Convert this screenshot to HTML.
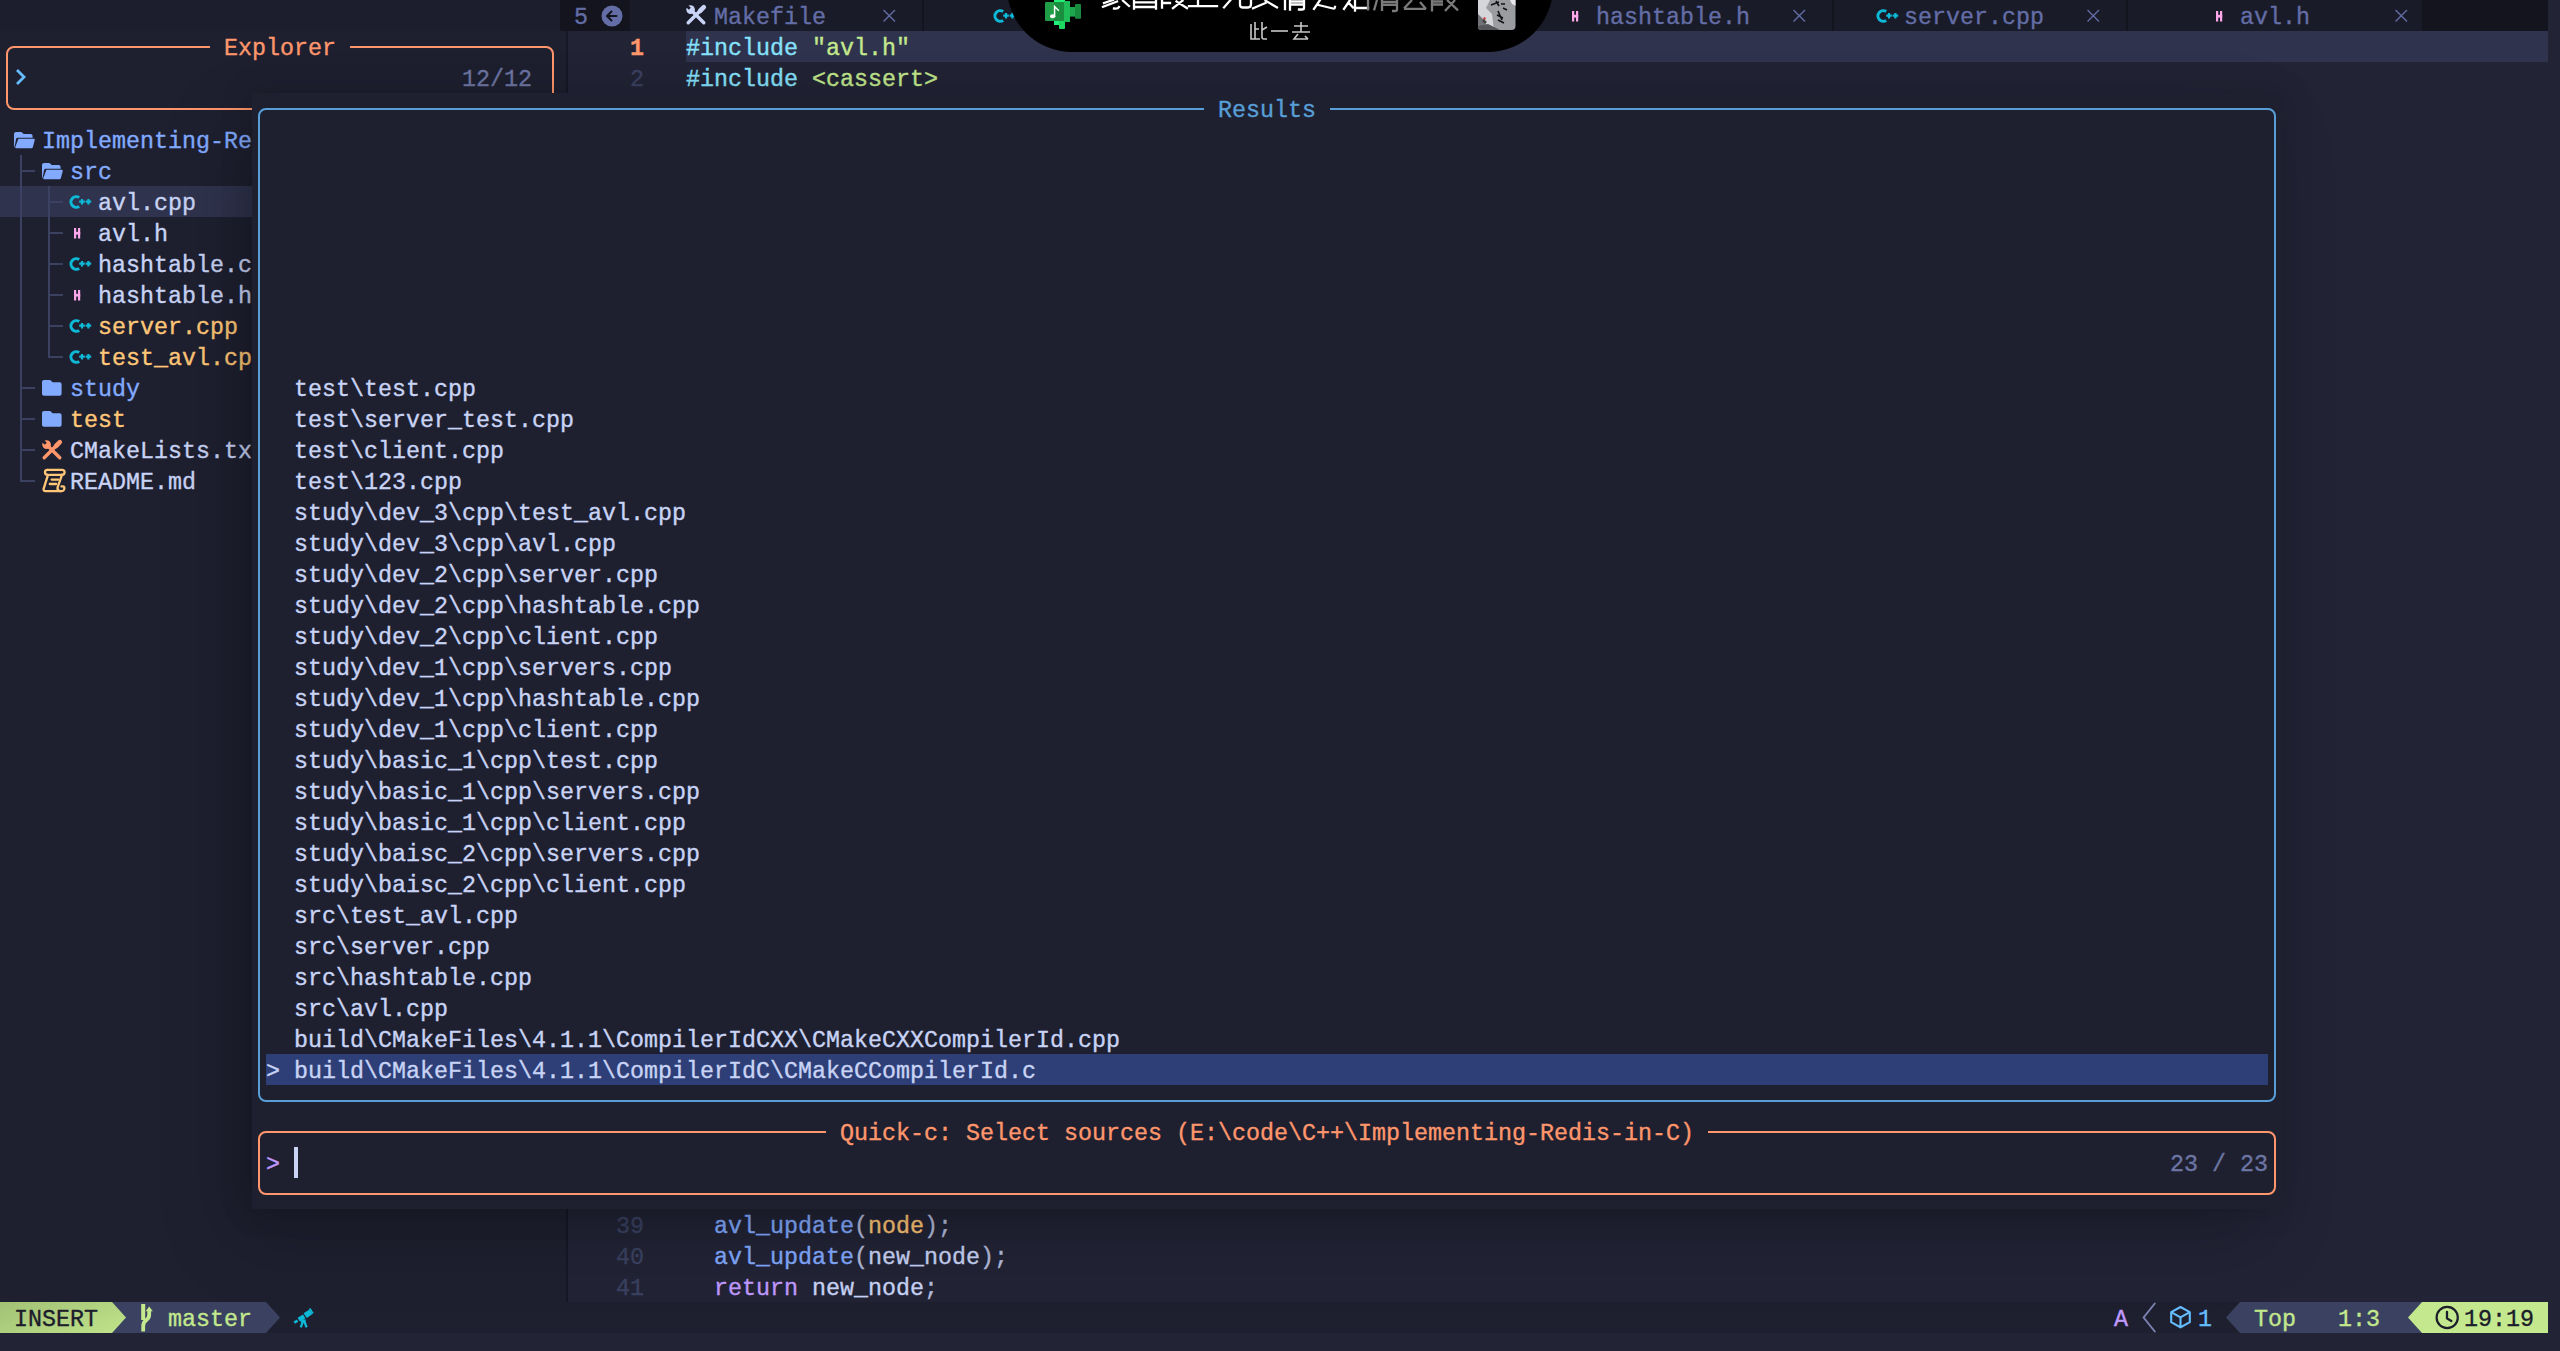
<!DOCTYPE html>
<html><head><meta charset="utf-8"><style>
html,body{margin:0;padding:0;width:2560px;height:1351px;overflow:hidden;background:#222436}
.t{position:absolute;white-space:pre;font-family:"Liberation Mono",monospace;font-size:23.33px;line-height:31px;height:31px;-webkit-text-stroke:0.35px currentColor}
svg{overflow:visible}
</style></head><body>
<div style="position:absolute;left:0px;top:0px;width:2560px;height:1351px;background:#222436;"></div><div style="position:absolute;left:0px;top:0px;width:560px;height:31px;background:#1c1e2d;"></div><div style="position:absolute;left:560px;top:0px;width:70px;height:31px;background:#13141e;"></div><div style="position:absolute;left:630px;top:0px;width:1792px;height:31px;background:#191b28;"></div><div style="position:absolute;left:2422px;top:0px;width:126px;height:31px;background:#13141e;"></div><div style="position:absolute;left:0px;top:31px;width:560px;height:1271px;background:#1e2030;"></div><div style="position:absolute;left:560px;top:31px;width:7px;height:1271px;background:#1e2030;"></div><div style="position:absolute;left:566px;top:31px;width:2px;height:1271px;background:#171826;"></div><div style="position:absolute;left:686px;top:31px;width:1862px;height:31px;background:#2f334d;"></div><div style="position:absolute;left:0px;top:186px;width:560px;height:31px;background:#2f334d;"></div><div style="position:absolute;left:0px;top:1302px;width:2548px;height:31px;background:#1e2030;"></div><div class="t" style="left:574px;top:3px;color:#636da6;">5</div><svg style="position:absolute;left:601px;top:5px;" width="22" height="22" viewBox="0 0 22 22"><circle cx="11" cy="11" r="10.5" fill="#636da6"/><path d="M15.5 11H6.5M10.5 6.5L6 11l4.5 4.5" stroke="#13141e" stroke-width="2" fill="none" stroke-linecap="round" stroke-linejoin="round"/></svg><svg style="position:absolute;left:686px;top:5px;" width="20" height="20" viewBox="0 0 20 20"><defs><mask id="tm1"><rect x="-2" y="-2" width="24" height="24" fill="#fff"/><path d="M-1 -1L3.8 3.8" stroke="#000" stroke-width="2.8"/></mask></defs><g mask="url(#tm1)"><circle cx="4.6" cy="4.6" r="4.3" fill="#c8d3f5"/></g><path d="M5.5 5.5L17.8 17.8" stroke="#c8d3f5" stroke-width="3.4" stroke-linecap="round"/><path d="M13.2 6.8L2.2 17.8" stroke="#c8d3f5" stroke-width="3.4" stroke-linecap="round"/><path d="M14 6L17.8 2.2" stroke="#c8d3f5" stroke-width="4.6" stroke-linecap="round"/></svg><div class="t" style="left:714px;top:3px;color:#636da6;">Makefile</div><svg style="position:absolute;left:882px;top:0px;" width="14" height="31" viewBox="0 0 14 31"><path d="M1.5 10L13 21.5M13 10L1.5 21.5" stroke="#636da6" stroke-width="1.4"/></svg><div style="position:absolute;left:922px;top:0px;width:2px;height:31px;background:#13141e;"></div><div style="position:absolute;left:1216px;top:0px;width:2px;height:31px;background:#13141e;"></div><div style="position:absolute;left:1510px;top:0px;width:2px;height:31px;background:#13141e;"></div><svg style="position:absolute;left:993px;top:8px;" width="24" height="16" viewBox="0 0 24 16"><path d="M10.2 3.6A5.3 5.3 0 1 0 10.2 12.4" stroke="#0db9d7" stroke-width="3" fill="none"/><path d="M10.2 7.7h5.6M13 4.9v5.6M16.6 7.7h5.6M19.4 4.9v5.6" stroke="#0db9d7" stroke-width="2.2"/></svg><svg style="position:absolute;left:1572px;top:10.6px;" width="7" height="11" viewBox="0 0 7 11"><path d="M1.1 0V10.4M5.1 0V10.4" stroke="#fca7ea" stroke-width="2.2"/><path d="M0 5.2H6.2" stroke="#fca7ea" stroke-width="2.8"/></svg><div class="t" style="left:1596px;top:3px;color:#636da6;">hashtable.h</div><svg style="position:absolute;left:1792px;top:0px;" width="14" height="31" viewBox="0 0 14 31"><path d="M1.5 10L13 21.5M13 10L1.5 21.5" stroke="#636da6" stroke-width="1.4"/></svg><div style="position:absolute;left:1832px;top:0px;width:2px;height:31px;background:#13141e;"></div><svg style="position:absolute;left:1876px;top:8px;" width="24" height="16" viewBox="0 0 24 16"><path d="M10.2 3.6A5.3 5.3 0 1 0 10.2 12.4" stroke="#0db9d7" stroke-width="3" fill="none"/><path d="M10.2 7.7h5.6M13 4.9v5.6M16.6 7.7h5.6M19.4 4.9v5.6" stroke="#0db9d7" stroke-width="2.2"/></svg><div class="t" style="left:1904px;top:3px;color:#636da6;">server.cpp</div><svg style="position:absolute;left:2086px;top:0px;" width="14" height="31" viewBox="0 0 14 31"><path d="M1.5 10L13 21.5M13 10L1.5 21.5" stroke="#636da6" stroke-width="1.4"/></svg><div style="position:absolute;left:2126px;top:0px;width:2px;height:31px;background:#13141e;"></div><svg style="position:absolute;left:2216px;top:10.6px;" width="7" height="11" viewBox="0 0 7 11"><path d="M1.1 0V10.4M5.1 0V10.4" stroke="#fca7ea" stroke-width="2.2"/><path d="M0 5.2H6.2" stroke="#fca7ea" stroke-width="2.8"/></svg><div class="t" style="left:2240px;top:3px;color:#636da6;">avl.h</div><svg style="position:absolute;left:2394px;top:0px;" width="14" height="31" viewBox="0 0 14 31"><path d="M1.5 10L13 21.5M13 10L1.5 21.5" stroke="#636da6" stroke-width="1.4"/></svg><div class="t" style="left:630px;top:34px;color:#ff966c;font-weight:bold">1</div><div class="t" style="left:630px;top:65px;color:#3b4261;">2</div><div class="t" style="left:686px;top:34px;color:#86e1fc">#include <span style="color:#c3e88d">"avl.h"</span></div><div class="t" style="left:686px;top:65px;color:#86e1fc">#include <span style="color:#c3e88d">&lt;cassert&gt;</span></div><div class="t" style="left:616px;top:1212px;color:#3b4261;">39</div><div class="t" style="left:616px;top:1243px;color:#3b4261;">40</div><div class="t" style="left:616px;top:1274px;color:#3b4261;">41</div><div class="t" style="left:714px;top:1212px;color:#82aaff">avl_update<span style="color:#b4bcdd">(</span><span style="color:#ffc777">node</span><span style="color:#b4bcdd">)</span><span style="color:#b4bcdd">;</span></div><div class="t" style="left:714px;top:1243px;color:#82aaff">avl_update<span style="color:#b4bcdd">(</span><span style="color:#c8d3f5">new_node</span><span style="color:#b4bcdd">)</span><span style="color:#b4bcdd">;</span></div><div class="t" style="left:714px;top:1274px;color:#c099ff">return <span style="color:#c8d3f5">new_node</span><span style="color:#b4bcdd">;</span></div><div style="position:absolute;left:6px;top:46px;width:544px;height:60px;border:2px solid #ff966c;border-radius:8px"></div><div style="position:absolute;left:210px;top:31px;width:140px;height:31px;background:#1e2030;"></div><div class="t" style="left:224px;top:34px;color:#ff966c;">Explorer</div><svg style="position:absolute;left:14px;top:66px;" width="14" height="22" viewBox="0 0 14 22"><path d="M3 4L10 11L3 18" stroke="#65bcff" stroke-width="2.8" fill="none"/></svg><div class="t" style="left:462px;top:65px;color:#6d75a3;">12/12</div><svg style="position:absolute;left:14px;top:132px;" width="22" height="18" viewBox="0 0 22 18"><path d="M0 2Q0 0 2 0H6.8Q7.6 0 8.2 0.6L9.6 2H16.6Q18.6 2 18.6 4V5.8H3.6Q2.4 5.8 2.1 7L0.4 15.6Q0 14.8 0 13.8Z" fill="#82aaff"/><path d="M4.4 6.8H19.6Q21 6.8 20.7 8.2L18.9 15Q18.6 16.3 17.3 16.3H2.2Q1 16.3 1.3 15Z" fill="#82aaff"/></svg><div class="t" style="left:42px;top:127px;color:#82aaff;">Implementing-Re</div><div style="position:absolute;left:20px;top:155px;width:2px;height:310px;background:#3b4261;"></div><div style="position:absolute;left:20px;top:465px;width:2px;height:16px;background:#3b4261;"></div><div style="position:absolute;left:20px;top:170px;width:15px;height:2px;background:#3b4261;"></div><div style="position:absolute;left:20px;top:387px;width:15px;height:2px;background:#3b4261;"></div><div style="position:absolute;left:20px;top:418px;width:15px;height:2px;background:#3b4261;"></div><div style="position:absolute;left:20px;top:449px;width:15px;height:2px;background:#3b4261;"></div><div style="position:absolute;left:20px;top:480px;width:15px;height:2px;background:#3b4261;"></div><div style="position:absolute;left:48px;top:186px;width:2px;height:155px;background:#3b4261;"></div><div style="position:absolute;left:48px;top:341px;width:2px;height:16px;background:#3b4261;"></div><div style="position:absolute;left:48px;top:201px;width:15px;height:2px;background:#3b4261;"></div><div style="position:absolute;left:48px;top:232px;width:15px;height:2px;background:#3b4261;"></div><div style="position:absolute;left:48px;top:263px;width:15px;height:2px;background:#3b4261;"></div><div style="position:absolute;left:48px;top:294px;width:15px;height:2px;background:#3b4261;"></div><div style="position:absolute;left:48px;top:325px;width:15px;height:2px;background:#3b4261;"></div><div style="position:absolute;left:48px;top:356px;width:15px;height:2px;background:#3b4261;"></div><svg style="position:absolute;left:42px;top:163px;" width="22" height="18" viewBox="0 0 22 18"><path d="M0 2Q0 0 2 0H6.8Q7.6 0 8.2 0.6L9.6 2H16.6Q18.6 2 18.6 4V5.8H3.6Q2.4 5.8 2.1 7L0.4 15.6Q0 14.8 0 13.8Z" fill="#82aaff"/><path d="M4.4 6.8H19.6Q21 6.8 20.7 8.2L18.9 15Q18.6 16.3 17.3 16.3H2.2Q1 16.3 1.3 15Z" fill="#82aaff"/></svg><div class="t" style="left:70px;top:158px;color:#82aaff;">src</div><svg style="position:absolute;left:69px;top:194px;" width="24" height="16" viewBox="0 0 24 16"><path d="M10.2 3.6A5.3 5.3 0 1 0 10.2 12.4" stroke="#0db9d7" stroke-width="3" fill="none"/><path d="M10.2 7.7h5.6M13 4.9v5.6M16.6 7.7h5.6M19.4 4.9v5.6" stroke="#0db9d7" stroke-width="2.2"/></svg><div class="t" style="left:98px;top:189px;color:#c8d3f5;">avl.cpp</div><svg style="position:absolute;left:74px;top:227.8px;" width="7" height="11" viewBox="0 0 7 11"><path d="M1.1 0V10.4M5.1 0V10.4" stroke="#fca7ea" stroke-width="2.2"/><path d="M0 5.2H6.2" stroke="#fca7ea" stroke-width="2.8"/></svg><div class="t" style="left:98px;top:220px;color:#c8d3f5;">avl.h</div><svg style="position:absolute;left:69px;top:256px;" width="24" height="16" viewBox="0 0 24 16"><path d="M10.2 3.6A5.3 5.3 0 1 0 10.2 12.4" stroke="#0db9d7" stroke-width="3" fill="none"/><path d="M10.2 7.7h5.6M13 4.9v5.6M16.6 7.7h5.6M19.4 4.9v5.6" stroke="#0db9d7" stroke-width="2.2"/></svg><div class="t" style="left:98px;top:251px;color:#c8d3f5;">hashtable.c</div><svg style="position:absolute;left:74px;top:289.8px;" width="7" height="11" viewBox="0 0 7 11"><path d="M1.1 0V10.4M5.1 0V10.4" stroke="#fca7ea" stroke-width="2.2"/><path d="M0 5.2H6.2" stroke="#fca7ea" stroke-width="2.8"/></svg><div class="t" style="left:98px;top:282px;color:#c8d3f5;">hashtable.h</div><svg style="position:absolute;left:69px;top:318px;" width="24" height="16" viewBox="0 0 24 16"><path d="M10.2 3.6A5.3 5.3 0 1 0 10.2 12.4" stroke="#0db9d7" stroke-width="3" fill="none"/><path d="M10.2 7.7h5.6M13 4.9v5.6M16.6 7.7h5.6M19.4 4.9v5.6" stroke="#0db9d7" stroke-width="2.2"/></svg><div class="t" style="left:98px;top:313px;color:#ffc777;">server.cpp</div><svg style="position:absolute;left:69px;top:349px;" width="24" height="16" viewBox="0 0 24 16"><path d="M10.2 3.6A5.3 5.3 0 1 0 10.2 12.4" stroke="#0db9d7" stroke-width="3" fill="none"/><path d="M10.2 7.7h5.6M13 4.9v5.6M16.6 7.7h5.6M19.4 4.9v5.6" stroke="#0db9d7" stroke-width="2.2"/></svg><div class="t" style="left:98px;top:344px;color:#ffc777;">test_avl.cp</div><svg style="position:absolute;left:42px;top:380px;" width="22" height="18" viewBox="0 0 22 18"><path d="M0 2Q0 0 2 0H7.5Q8.5 0 9.2 0.8L10.5 2.2H17.6Q19.6 2.2 19.6 4.2V13.7Q19.6 15.7 17.6 15.7H2Q0 15.7 0 13.7Z" fill="#82aaff"/></svg><div class="t" style="left:70px;top:375px;color:#82aaff;">study</div><svg style="position:absolute;left:42px;top:411px;" width="22" height="18" viewBox="0 0 22 18"><path d="M0 2Q0 0 2 0H7.5Q8.5 0 9.2 0.8L10.5 2.2H17.6Q19.6 2.2 19.6 4.2V13.7Q19.6 15.7 17.6 15.7H2Q0 15.7 0 13.7Z" fill="#82aaff"/></svg><div class="t" style="left:70px;top:406px;color:#ffc777;">test</div><svg style="position:absolute;left:42px;top:440px;" width="20" height="20" viewBox="0 0 20 20"><defs><mask id="tm2"><rect x="-2" y="-2" width="24" height="24" fill="#fff"/><path d="M-1 -1L3.8 3.8" stroke="#000" stroke-width="2.8"/></mask></defs><g mask="url(#tm2)"><circle cx="4.6" cy="4.6" r="4.3" fill="#ff966c"/></g><path d="M5.5 5.5L17.8 17.8" stroke="#ff966c" stroke-width="3.4" stroke-linecap="round"/><path d="M13.2 6.8L2.2 17.8" stroke="#ff966c" stroke-width="3.4" stroke-linecap="round"/><path d="M14 6L17.8 2.2" stroke="#ff966c" stroke-width="4.6" stroke-linecap="round"/></svg><div class="t" style="left:70px;top:437px;color:#c8d3f5;">CMakeLists.tx</div><svg style="position:absolute;left:42px;top:468px;" width="24" height="26" viewBox="0 0 24 26"><g stroke="#ffc777" stroke-width="2.3" fill="none" stroke-linecap="round" stroke-linejoin="round"><path d="M5.5 1.8H20Q22.6 1.8 22.6 4.3Q22.6 6.8 20 6.8H7.5"/><path d="M5.5 1.8Q3 1.8 3 4.3Q3 6.8 5.5 6.8"/><path d="M6 6.8L1.6 20.8Q1.2 23.2 3.6 23.2H17.5"/><path d="M20 6.8L15.6 19.4Q15 22.6 18 23.2Q22.4 23.6 22.4 20.2Q22.4 17.8 19.5 18.4"/><path d="M9.6 11.6H16.2M7.8 16H14.2"/></g></svg><div class="t" style="left:70px;top:468px;color:#c8d3f5;">README.md</div><div style="position:absolute;left:252px;top:93px;width:2030px;height:1116px;background:#1e2030;box-shadow:0 0 28px 2px rgba(0,0,0,0.15), -20px 30px 70px 0 rgba(0,0,0,0.2)"></div><div style="position:absolute;left:258px;top:108px;width:2014px;height:990px;border:2px solid #589ed7;border-radius:8px"></div><div style="position:absolute;left:1204px;top:93px;width:126px;height:31px;background:#1e2030;"></div><div class="t" style="left:1218px;top:96px;color:#589ed7;">Results</div><div style="position:absolute;left:266px;top:1054px;width:2002px;height:31px;background:#2d3f76;"></div><div class="t" style="left:294px;top:375px;color:#c8d3f5;">test\test.cpp</div><div class="t" style="left:294px;top:406px;color:#c8d3f5;">test\server_test.cpp</div><div class="t" style="left:294px;top:437px;color:#c8d3f5;">test\client.cpp</div><div class="t" style="left:294px;top:468px;color:#c8d3f5;">test\123.cpp</div><div class="t" style="left:294px;top:499px;color:#c8d3f5;">study\dev_3\cpp\test_avl.cpp</div><div class="t" style="left:294px;top:530px;color:#c8d3f5;">study\dev_3\cpp\avl.cpp</div><div class="t" style="left:294px;top:561px;color:#c8d3f5;">study\dev_2\cpp\server.cpp</div><div class="t" style="left:294px;top:592px;color:#c8d3f5;">study\dev_2\cpp\hashtable.cpp</div><div class="t" style="left:294px;top:623px;color:#c8d3f5;">study\dev_2\cpp\client.cpp</div><div class="t" style="left:294px;top:654px;color:#c8d3f5;">study\dev_1\cpp\servers.cpp</div><div class="t" style="left:294px;top:685px;color:#c8d3f5;">study\dev_1\cpp\hashtable.cpp</div><div class="t" style="left:294px;top:716px;color:#c8d3f5;">study\dev_1\cpp\client.cpp</div><div class="t" style="left:294px;top:747px;color:#c8d3f5;">study\basic_1\cpp\test.cpp</div><div class="t" style="left:294px;top:778px;color:#c8d3f5;">study\basic_1\cpp\servers.cpp</div><div class="t" style="left:294px;top:809px;color:#c8d3f5;">study\basic_1\cpp\client.cpp</div><div class="t" style="left:294px;top:840px;color:#c8d3f5;">study\baisc_2\cpp\servers.cpp</div><div class="t" style="left:294px;top:871px;color:#c8d3f5;">study\baisc_2\cpp\client.cpp</div><div class="t" style="left:294px;top:902px;color:#c8d3f5;">src\test_avl.cpp</div><div class="t" style="left:294px;top:933px;color:#c8d3f5;">src\server.cpp</div><div class="t" style="left:294px;top:964px;color:#c8d3f5;">src\hashtable.cpp</div><div class="t" style="left:294px;top:995px;color:#c8d3f5;">src\avl.cpp</div><div class="t" style="left:294px;top:1026px;color:#c8d3f5;">build\CMakeFiles\4.1.1\CompilerIdCXX\CMakeCXXCompilerId.cpp</div><div class="t" style="left:294px;top:1057px;color:#c8d3f5;">build\CMakeFiles\4.1.1\CompilerIdC\CMakeCCompilerId.c</div><div class="t" style="left:266px;top:1057px;color:#c8d3f5;">&gt;</div><div style="position:absolute;left:258px;top:1131px;width:2014px;height:60px;border:2px solid #ff966c;border-radius:8px"></div><div style="position:absolute;left:826px;top:1116px;width:882px;height:31px;background:#1e2030;"></div><div class="t" style="left:840px;top:1119px;color:#ff966c;">Quick-c: Select sources (E:\code\C++\Implementing-Redis-in-C)</div><div class="t" style="left:266px;top:1150px;color:#c099ff;">&gt;</div><div style="position:absolute;left:294px;top:1147px;width:4px;height:31px;background:#c8d3f5;"></div><div class="t" style="left:2170px;top:1150px;color:#6d75a3;">23 / 23</div><div style="position:absolute;left:0px;top:1302px;width:112px;height:31px;background:#c3e88d;"></div><div style="position:absolute;left:112px;top:1302px;width:154px;height:31px;background:#3b4261;"></div><svg style="position:absolute;left:112px;top:1302px;" width="14" height="31" viewBox="0 0 14 31"><path d="M0 0L14 15.5L0 31Z" fill="#c3e88d"/></svg><svg style="position:absolute;left:266px;top:1302px;" width="14" height="31" viewBox="0 0 14 31"><path d="M0 0L14 15.5L0 31Z" fill="#3b4261"/></svg><div style="position:absolute;left:0px;top:1302px;width:126px;height:31px;background:linear-gradient(160deg, rgba(0,0,0,0.17), rgba(0,0,0,0.02));clip-path:polygon(0 0,112px 0,126px 15.5px,112px 31px,0 31px)"></div><div class="t" style="left:14px;top:1305px;color:#1b1d2b;">INSERT</div><svg style="position:absolute;left:140px;top:1303px;" width="14" height="30" viewBox="0 0 14 30"><rect x="1.2" y="1" width="4" height="16" fill="#c3e88d"/><path d="M3.2 28.5V23Q3.2 19 6.5 16.8Q9.2 15 9.2 11.5V6.5" stroke="#c3e88d" stroke-width="3.8" fill="none"/><path d="M5.6 8.2L9.2 3.6L12.8 8.2Z" fill="#c3e88d"/></svg><div class="t" style="left:168px;top:1305px;color:#c3e88d;">master</div><svg style="position:absolute;left:293px;top:1307px;" width="21" height="21" viewBox="0 0 21 21"><g stroke="#0db9d7" fill="none"><path d="M1.2 15.6L4.6 13.6" stroke-width="2.6"/><path d="M5.8 12.8L11.2 9.4" stroke-width="4.6"/><path d="M12.2 8.6L17.6 5" stroke-width="5.6"/><path d="M16.6 1.6L19.8 6.6" stroke-width="2"/><path d="M10 14L7.8 20.4M11.2 14L13.6 20.4" stroke-width="2.3"/></g><rect x="8.2" y="12.4" width="4.4" height="3.2" fill="#0db9d7"/></svg><div class="t" style="left:2114px;top:1305px;color:#c099ff;">A</div><svg style="position:absolute;left:2142px;top:1302px;" width="14" height="31" viewBox="0 0 14 31"><path d="M12.8 1.5L1.6 15.5L12.8 29.5" stroke="#7d82b3" stroke-width="1.9" fill="none" stroke-linecap="round"/></svg><svg style="position:absolute;left:2169px;top:1305px;" width="23" height="24" viewBox="0 0 23 24"><path d="M11.5 2L20.8 7.2V17.2L11.5 22.4L2.2 17.2V7.2Z M2.2 7.2L11.5 12.4L20.8 7.2M11.5 12.4V22.4" stroke="#65bcff" stroke-width="2.1" fill="none" stroke-linejoin="round"/></svg><div class="t" style="left:2198px;top:1305px;color:#65bcff;">1</div><div style="position:absolute;left:2240px;top:1302px;width:182px;height:31px;background:#3b4261;"></div><svg style="position:absolute;left:2226px;top:1302px;" width="14" height="31" viewBox="0 0 14 31"><path d="M14 0L0 15.5L14 31Z" fill="#3b4261"/></svg><div class="t" style="left:2254px;top:1305px;color:#c3e88d;">Top</div><div class="t" style="left:2338px;top:1305px;color:#c3e88d;">1:3</div><div style="position:absolute;left:2422px;top:1302px;width:126px;height:31px;background:#c3e88d;"></div><svg style="position:absolute;left:2408px;top:1302px;" width="14" height="31" viewBox="0 0 14 31"><path d="M14 0L0 15.5L14 31Z" fill="#c3e88d"/></svg><svg style="position:absolute;left:2434px;top:1305px;" width="26" height="26" viewBox="0 0 26 26"><circle cx="13.2" cy="12.5" r="10.6" stroke="#1b1d2b" stroke-width="2.2" fill="none"/><path d="M13 6.8V13.4L17.4 16" stroke="#1b1d2b" stroke-width="2.3" fill="none" stroke-linecap="round"/></svg><div class="t" style="left:2464px;top:1305px;color:#1b1d2b;">19:19</div><div style="position:absolute;left:1007px;top:-100px;width:546px;height:152px;background:#000;border-radius:0 0 65px 65px"></div><svg style="position:absolute;left:1040px;top:0px;" width="42" height="30" viewBox="0 0 42 30"><rect x="14" y="-2" width="11" height="6" fill="#22ee78"/><rect x="14" y="19" width="5" height="6" fill="#22f07a"/><rect x="19" y="19" width="6" height="10" rx="1" fill="#1ed960"/><rect x="5" y="2" width="19.5" height="19" rx="1.2" fill="#1f9e47"/><rect x="14" y="2.2" width="10" height="18.6" fill="#1a8d3f"/><rect x="24" y="1" width="6" height="21" fill="#1fbd58"/><rect x="30" y="7" width="5.5" height="9.6" fill="#1ea64d"/><rect x="35" y="4" width="6" height="14.8" rx="1" fill="#188a3e"/><path d="M14.6 17V6.5L18.8 10.8" stroke="#fff" stroke-width="1.5" fill="none"/><ellipse cx="12.6" cy="16.2" rx="2.6" ry="2" fill="#fff"/></svg><svg style="position:absolute;left:1095px;top:0px;" width="380" height="14" viewBox="0 0 380 14"><g stroke="#fff" stroke-width="2.3" fill="none" stroke-linecap="square"><path d="M8 6.8L22 1.5M9 3L18 0M28 0.7L34 6M19 8.5Q23 9 24 7"/><path d="M39 0V8.5M61 0V8.5M39 7H61M41 2.3H59"/><path d="M67 0V7.5M67 3H75M78 8.2L87.5 0.7M81.5 1.5L92 8.2"/><path d="M94 6.2H122M103 0V6"/><path d="M129 7.5L135.5 0M145 0V5Q145 7.5 148 7.5H153Q156 7.5 156 4V0"/><path d="M158 8.2L170.5 3M170.5 0.7L182 7.4"/><path d="M190 0V9M195 0V9.5M195 1.5H209M195 4.5H209M209 0V8Q209 9.5 207 9.5H204"/><path d="M219 9L225 0M223.5 5L238 8.5Q240 9 240 7"/><path d="M249 9L255 0M254 3L258 7.5M260 0V10.5M260 8H273"/></g><g stroke="#7a7a7a" stroke-width="2.3" fill="none"><path d="M273 0V10.5"/><path d="M279 10.4L282 0M287 0V11M302 0V9.5Q302 11 300 11H297M287 2H302M287 4.8H302"/><path d="M309 8.5L317 0M309 8.8H331M331 9L325 2"/><path d="M337 0V11.5M337 1.5H348M337 4.5H348M350 11L360 0M352 0L363 10.4"/></g></svg><svg style="position:absolute;left:1248px;top:20px;" width="64" height="22" viewBox="0 0 64 22"><g stroke="#c8c8c8" stroke-width="1.6" fill="none"><path d="M3 4V19H12M7 9H11M7 2V19M14 2V17Q14 19 16 19H19M14 10L19 7"/><path d="M23 11H40"/><path d="M46 6H60M44 12H62M53 2V12M50 14L46 19H60M57 16L60 19"/></g></svg><svg style="position:absolute;left:1478px;top:0px;" width="38" height="30" viewBox="0 0 38 30"><defs><clipPath id="alc"><rect x="0" y="-6" width="37.5" height="36" rx="4"/></clipPath></defs><g clip-path="url(#alc)"><rect x="0" y="-6" width="38" height="36" fill="#9a9ca0"/><path d="M0 0H12L8 8L14 14L16 30H0Z" fill="#d4d6da"/><path d="M0 14L6 20L10 30H0Z" fill="#707276"/><path d="M0 26L10 24L22 30H0Z" fill="#55575a"/><path d="M32 0H38V6L34 4Z" fill="#e8e8ec"/><path d="M13 5L21 2M18 1L21 6M23 4H27M25 8L29 10M20 11L24 20M19 15L25 18M20 20L26 23" stroke="#111" stroke-width="1.6" fill="none"/><circle cx="6.5" cy="18.5" r="1.2" fill="#c33"/><path d="M5 20L8 23" stroke="#444" stroke-width="2.5"/></g></svg>
</body></html>
